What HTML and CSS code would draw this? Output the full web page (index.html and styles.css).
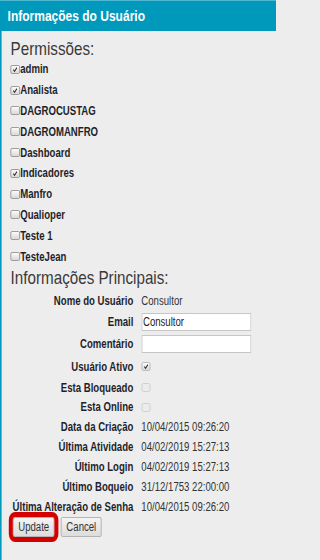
FILE: index.html
```html
<!DOCTYPE html>
<html lang="pt-BR">
<head>
<meta charset="utf-8">
<title>Informações do Usuário</title>
<link rel="stylesheet" href="styles.css">
</head>
<body>
<div class="frame">
<div class="page">
  <div class="header">Informações do Usuário</div>
  <div class="content">
    <h2 class="section-title">Permissões:</h2>
    <ul class="perm-list">
      <li><span class="cb checked"><svg viewBox="0 0 10 10"><path d="M2 5.2 L4.2 7.6 L8.4 2.2"/></svg></span><span>admin</span></li>
      <li><span class="cb checked"><svg viewBox="0 0 10 10"><path d="M2 5.2 L4.2 7.6 L8.4 2.2"/></svg></span><span>Analista</span></li>
      <li><span class="cb"></span><span>DAGROCUSTAG</span></li>
      <li><span class="cb"></span><span>DAGROMANFRO</span></li>
      <li><span class="cb"></span><span>Dashboard</span></li>
      <li><span class="cb checked"><svg viewBox="0 0 10 10"><path d="M2 5.2 L4.2 7.6 L8.4 2.2"/></svg></span><span>Indicadores</span></li>
      <li><span class="cb"></span><span>Manfro</span></li>
      <li><span class="cb"></span><span>Qualioper</span></li>
      <li><span class="cb"></span><span>Teste 1</span></li>
      <li><span class="cb"></span><span>TesteJean</span></li>
    </ul>
    <h2 class="section-title second">Informações Principais:</h2>
    <div class="details">
      <div class="label">Nome do Usuário</div><div class="value">Consultor</div>
      <div class="label">Email</div><div class="value"><input class="text-input" type="text" value="Consultor"></div>
      <div class="label">Comentário</div><div class="value"><input class="text-input" type="text" value=""></div>
      <div class="label">Usuário Ativo</div><div class="value"><span class="cb small checked"><svg viewBox="0 0 10 10"><path d="M2 5.2 L4.2 7.6 L8.4 2.2"/></svg></span></div>
      <div class="label">Esta Bloqueado</div><div class="value"><span class="cb small disabled"></span></div>
      <div class="label">Esta Online</div><div class="value"><span class="cb small disabled"></span></div>
      <div class="label">Data da Criação</div><div class="value">10/04/2015 09:26:20</div>
      <div class="label">Última Atividade</div><div class="value">04/02/2019 15:27:13</div>
      <div class="label">Último Login</div><div class="value">04/02/2019 15:27:13</div>
      <div class="label">Último Boqueio</div><div class="value">31/12/1753 22:00:00</div>
      <div class="label">Última Alteração de Senha</div><div class="value">10/04/2015 09:26:20</div>
    </div>
    <div class="actions">
      <button class="btn highlighted" type="button">Update</button>
      <button class="btn" type="button">Cancel</button>
    </div>
  </div>
</div>
</div>
</body>
</html>
```
FILE: styles.css
```css
html, body {
  margin: 0;
  padding: 0;
  background: #ededed;
  overflow: hidden;
}

body {
  font-family: "Liberation Sans", Arial, sans-serif;
  color: #222;
}

/* Clipping frame at the window size. */
.frame {
  width: 276px;
  height: 560px;
  overflow: hidden;
}

/* The source UI renders with a horizontally condensed face; reproduce it by
   laying out at 345px and condensing the whole page to 276px. */
.page {
  width: 345px;
  height: 560px;
  box-sizing: border-box;
  border-left: 2.5px solid #0099bc;
  background: #ededed;
  transform: scaleX(0.8);
  transform-origin: 0 0;
}

.header {
  height: 30px;
  line-height: 30px;
  border-top: 1px solid #4fb8d2;
  background: #0099bc;
  color: #fff;
  font-weight: bold;
  font-size: 15px;
  padding-left: 10px;
  margin-left: -2.5px;
  white-space: nowrap;
}

.content {
  padding-left: 11.25px;
}

.section-title {
  margin: 8px 0 0 0;
  font-size: 19px;
  line-height: 20px;
  font-weight: normal;
  color: #3a3a3a;
}

.section-title.second {
  margin-top: 1px;
}

.perm-list {
  list-style: none;
  margin: 0;
  padding: 0;
}

.perm-list li {
  height: 20.8px;
  display: flex;
  align-items: center;
  font-size: 12px;
  font-weight: bold;
  color: #1f1f2a;
}

.cb {
  display: inline-flex;
  align-items: center;
  justify-content: center;
  box-sizing: border-box;
  width: 11.5px;
  height: 9px;
  border: 1px solid #949494;
  border-radius: 2px;
  background: linear-gradient(#fbfbfb, #d9d9d9);
  margin-right: 0.5px;
  flex: none;
}

.cb svg {
  width: 100%;
  height: 100%;
}

.cb svg path {
  fill: none;
  stroke: #2a2a2a;
  stroke-width: 1.7;
}

.cb.small {
  width: 11px;
  height: 9px;
  border-color: #b5b5b5;
}

.cb.disabled {
  border-color: #cdcdcd;
  background: #ececec;
}

.details {
  margin-top: 3px;
  margin-left: 2.5px;
  display: grid;
  grid-template-columns: max-content 1fr;
  grid-template-rows: 20px 22px 23px 22px 20px 19px 20px 20px 20px 20px 20px;
  column-gap: 10px;
  font-size: 12px;
}

.label {
  font-weight: bold;
  text-align: right;
  display: flex;
  align-items: center;
  justify-content: flex-end;
  white-space: nowrap;
  color: #1f1f2a;
}

.value {
  display: flex;
  align-items: center;
  color: #333;
  white-space: nowrap;
}

.text-input {
  box-sizing: border-box;
  width: 137.5px;
  height: 18px;
  border: 1px solid #c6c6c6;
  background: #fff;
  padding: 0 1px;
  margin: 0;
  font-family: "Liberation Sans", Arial, sans-serif;
  font-size: 12px;
  color: #222;
  outline: none;
}

.actions {
  display: flex;
  gap: 7.5px;
  padding-left: 2.5px;
}

.btn {
  box-sizing: border-box;
  height: 20px;
  padding: 0 6px;
  margin: 0;
  border: 1px solid #adadad;
  border-radius: 2px;
  background: linear-gradient(#f4f4f4, #dcdcdc);
  font-family: "Liberation Sans", Arial, sans-serif;
  font-size: 12px;
  color: #333;
}

.btn.highlighted {
  outline: 5px solid #d40000;
  outline-offset: 0;
  border-radius: 3px;
}
```
